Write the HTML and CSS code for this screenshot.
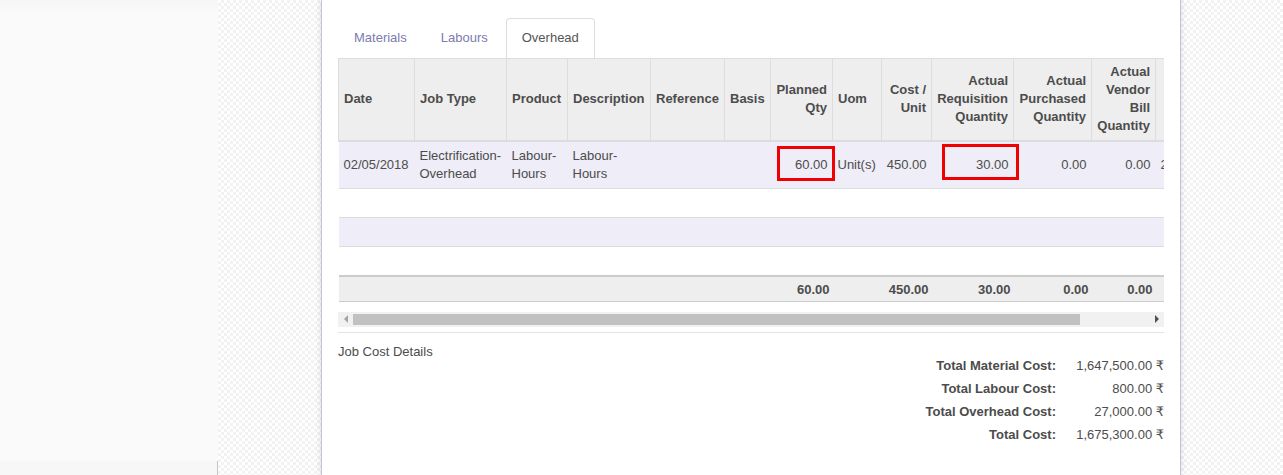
FILE: index.html
```html
<!DOCTYPE html>
<html>
<head>
<meta charset="utf-8">
<link rel="stylesheet" href="styles.css">
</head>
<body>
<aside class="sidebar">
  <div class="sidebar-body"></div>
  <div class="sidebar-foot"></div>
</aside>
<main class="workspace">
  <section class="sheet">
    <ul class="tabs">
      <li class="tab">Materials</li>
      <li class="tab">Labours</li>
      <li class="tab active">Overhead</li>
    </ul>
    <div class="grid-wrap">
      <div class="grid-clip">
        <table class="grid">
          <colgroup>
            <col class="w76"><col class="w92"><col class="w61"><col class="w83"><col class="w74"><col class="w46"><col class="w62"><col class="w49"><col class="w50"><col class="w82"><col class="w78"><col class="w64"><col class="w90"><col class="w90">
          </colgroup>
          <thead>
            <tr>
              <th>Date</th>
              <th>Job Type</th>
              <th>Product</th>
              <th>Description</th>
              <th>Reference</th>
              <th>Basis</th>
              <th class="num">Planned Qty</th>
              <th>Uom</th>
              <th class="num">Cost / Unit</th>
              <th class="num">Actual Requisition Quantity</th>
              <th class="num">Actual Purchased Quantity</th>
              <th class="num">Actual Vendor Bill Quantity</th>
              <th class="num">Subtotal</th>
              <th></th>
            </tr>
          </thead>
          <tbody>
            <tr class="odd">
              <td>02/05/2018</td>
              <td>Electrification-Overhead</td>
              <td>Labour-Hours</td>
              <td>Labour-Hours</td>
              <td></td>
              <td></td>
              <td class="num">60.00</td>
              <td>Unit(s)</td>
              <td class="num">450.00</td>
              <td class="num">30.00</td>
              <td class="num">0.00</td>
              <td class="num">0.00</td>
              <td>27,000.00</td>
              <td></td>
            </tr>
            <tr class="empty"><td colspan="14"></td></tr>
            <tr class="empty odd"><td colspan="14"></td></tr>
            <tr class="empty"><td colspan="14"></td></tr>
          </tbody>
          <tfoot>
            <tr>
              <td></td><td></td><td></td><td></td><td></td><td></td>
              <td class="num">60.00</td>
              <td></td>
              <td class="num">450.00</td>
              <td class="num">30.00</td>
              <td class="num">0.00</td>
              <td class="num">0.00</td>
              <td class="num">27,000.00</td>
              <td></td>
            </tr>
          </tfoot>
        </table>
      </div>
      <div class="mark mark-planned"></div>
      <div class="mark mark-req"></div>
    </div>
    <div class="hscroll">
      <div class="arrow arrow-left"></div>
      <div class="track"><div class="thumb"></div></div>
      <div class="arrow arrow-right"></div>
    </div>
    <hr class="sep">
    <div class="details">
      <div class="details-label">Job Cost Details</div>
      <div class="totals">
        <div class="t-label">Total Material Cost:</div><div class="t-value">1,647,500.00 ₹</div>
        <div class="t-label">Total Labour Cost:</div><div class="t-value">800.00 ₹</div>
        <div class="t-label">Total Overhead Cost:</div><div class="t-value">27,000.00 ₹</div>
        <div class="t-label">Total Cost:</div><div class="t-value">1,675,300.00 ₹</div>
      </div>
    </div>
  </section>
</main>
</body>
</html>
```
FILE: styles.css
```css
* { box-sizing: border-box; }

html, body {
  margin: 0;
  height: 475px;
  overflow: hidden;
}

body {
  display: flex;
  font-family: "Liberation Sans", Arial, "DejaVu Sans", sans-serif;
  font-size: 13px;
  line-height: 18px;
  color: #4c4c4c;
  background: #fff;
}

.sidebar {
  width: 218px;
  flex: none;
  display: flex;
  flex-direction: column;
  background: #fafafa;
}

.sidebar-body {
  flex: 1;
  background: linear-gradient(#f6f6f6, #fafafa 12px);
}

.sidebar-foot {
  height: 14px;
  background: #f7f7f7;
  border-right: 1px solid #c4c4c4;
}

.workspace {
  flex: 1;
  display: flex;
  align-items: stretch;
  background-color: #ffffff;
  background-image: conic-gradient(#f2f2f2 25%, #ffffff 0 50%, #f2f2f2 0 75%, #ffffff 0);
  background-size: 6px 6px;
  min-width: 0;
}

.sheet {
  margin-left: 103px;
  width: 860px;
  flex: none;
  background: #fff;
  border-left: 1px solid #c6c3da;
  border-right: 1px solid #c6c3da;
  box-shadow: 0 0 6px rgba(60, 50, 110, 0.18);
  padding: 18px 16px 0 16px;
}

/* tabs */
.tabs {
  list-style: none;
  margin: 0;
  padding: 0;
  display: flex;
  gap: 2px;
}

.tab {
  padding: 9px 15px 11px 15px;
  border: 1px solid transparent;
  border-bottom: 0;
  border-radius: 4px 4px 0 0;
  color: #7c7bad;
  line-height: 19px;
  height: 40px;
}

.tab.active {
  color: #555555;
  border-color: #dddddd;
  background: #fff;
}

/* grid */
.grid-wrap {
  position: relative;
}

.grid-clip {
  width: 826px;
  overflow: hidden;
}

.grid {
  border-collapse: collapse;
  table-layout: fixed;
  width: 997px;
}

.w76 { width: 76px; }
.w92 { width: 92px; }
.w61 { width: 61px; }
.w83 { width: 83px; }
.w74 { width: 74px; }
.w46 { width: 46px; }
.w62 { width: 62px; }
.w49 { width: 49px; }
.w50 { width: 50px; }
.w82 { width: 82px; }
.w78 { width: 78px; }
.w64 { width: 64px; }
.w90 { width: 90px; }

.grid th {
  background: #eeeeee;
  border: 1px solid #dddddd;
  border-bottom: 2px solid #dddddd;
  padding: 4px 5px 5px 5px;
  font-weight: bold;
  text-align: left;
  vertical-align: middle;
  line-height: 18px;
  color: #4c4c4c;
}

.grid .num { text-align: right; }

.grid td {
  padding: 5px 5px 5px 5px;
  vertical-align: middle;
  line-height: 18px;
  border-bottom: 1px solid #dddddd;
  white-space: normal;
}

.grid tbody tr.odd td { background: #efedf7; }

.grid tr.empty td { height: 29px; }

.grid tfoot td {
  background: #eeeeee;
  border-top: 2px solid #cccccc;
  border-bottom: 1px solid #cccccc;
  padding: 4px 3px 2px 5px;
  font-weight: bold;
  line-height: 18px;
}

.mark {
  position: absolute;
  border: 3px solid #f00000;
}

.mark-planned {
  left: 439px;
  top: 88px;
  width: 58px;
  height: 35px;
}

.mark-req {
  left: 604px;
  top: 86px;
  width: 77px;
  height: 36px;
}

/* fake horizontal scrollbar */
.hscroll {
  margin-top: 10px;
  width: 826px;
  height: 15px;
  display: flex;
  background: #f1f1f1;
}

.arrow {
  width: 15px;
  flex: none;
  display: flex;
  align-items: center;
  justify-content: center;
}

.arrow::before {
  content: "";
  width: 0;
  height: 0;
  border-top: 4px solid transparent;
  border-bottom: 4px solid transparent;
}

.arrow-left::before { border-right: 4px solid #a3a3a3; }
.arrow-right::before { border-left: 4px solid #505050; }

.track {
  flex: 1;
  padding: 2px 0;
}

.thumb {
  width: 727px;
  height: 11px;
  background: #c1c1c1;
}

.sep {
  margin: 5px 0 0 0;
  width: 826px;
  border: 0;
  border-top: 1px solid #e3e3e3;
  height: 0;
}

.details {
  margin-top: 10px;
  width: 826px;
  display: flex;
  justify-content: space-between;
  align-items: flex-start;
}

.details-label {
  line-height: 18px;
}

.totals {
  margin-top: 11px;
  display: grid;
  grid-template-columns: auto 88px;
  column-gap: 20px;
  line-height: 23px;
}

.t-label {
  font-weight: bold;
  text-align: right;
}

.t-value {
  text-align: right;
  white-space: nowrap;
}
```
